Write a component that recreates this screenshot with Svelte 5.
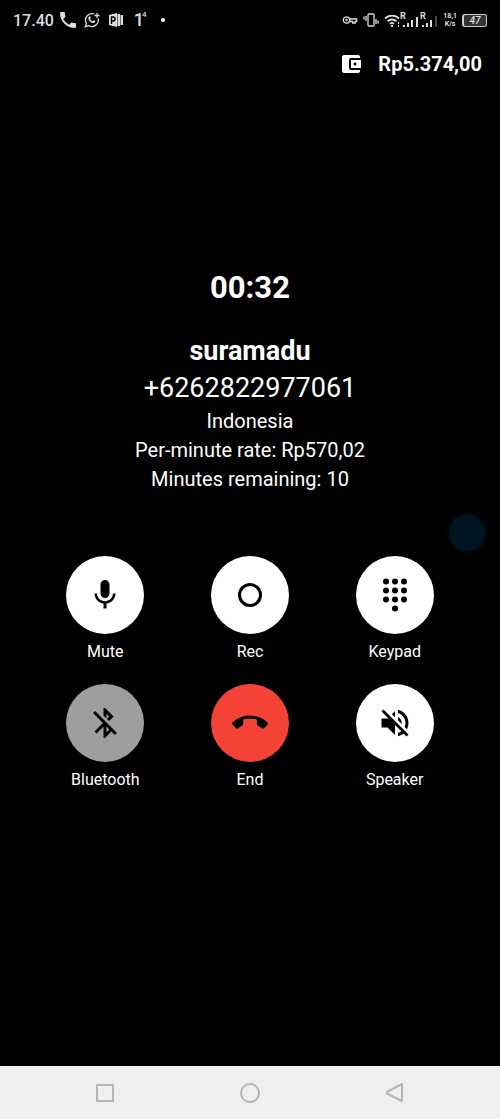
<script>
  // Call state
  const call = {
    time: '00:32',
    name: 'suramadu',
    number: '+6262822977061',
    country: 'Indonesia',
    rate: 'Rp570,02',
    remaining: 10
  };

  const balance = 'Rp5.374,00';

  const actions = [
    { id: 'mute', label: 'Mute' },
    { id: 'rec', label: 'Rec' },
    { id: 'keypad', label: 'Keypad' },
    { id: 'bluetooth', label: 'Bluetooth' },
    { id: 'end', label: 'End' },
    { id: 'speaker', label: 'Speaker' }
  ];

  // Dialpad dots, last row has only the middle one
  const dots = [
    [6, 3], [12, 3], [18, 3],
    [6, 9], [12, 9], [18, 9],
    [6, 15], [12, 15], [18, 15],
    [12, 21]
  ];
</script>

<div class="screen">
  <header class="status">
    <div class="status-left">
      <span class="clock">17.40</span>
      <svg width="16" height="16" viewBox="3 3 18 18">
        <path d="M20 15.5c-1.25 0-2.45-.2-3.57-.57a1.02 1.02 0 0 0-1.02.24l-2.2 2.2a15.07 15.07 0 0 1-6.59-6.59l2.2-2.21a.96.96 0 0 0 .25-1A11.36 11.36 0 0 1 8.5 4c0-.55-.45-1-1-1H4c-.55 0-1 .45-1 1 0 9.390 7.610 17 17 17 .55 0 1-.45 1-1v-3.500c0-.55-.45-1-1-1z" />
      </svg>
      <svg width="16" height="16" viewBox="0 0 16 16">
        <path class="line" d="M10 1.900A6.500 6.500 0 0 0 2.400 11.300L1.300 14.700l3.500-1A6.500 6.500 0 0 0 14.200 6.500" />
        <path d="M5.200 4.400c.4-.4.9-.3 1.100.1l.6 1.400-.8 1c.6 1.200 1.400 1.900 2.700 2.400l.9-1 1.600.8c.2.9-.7 2-1.800 2-2.600 0-5.300-2.900-5.200-5.100 0-.6.400-1.200.9-1.600z" />
        <path class="line" d="M13 1v5M10.500 3.500h5" />
      </svg>
      <svg width="16" height="14" viewBox="0 0 16 14">
        <path d="M1 2l8-2v14l-8-2zM9.500 1H12v12H9.500zM12.500 2H15v10h-2.500z" />
        <path class="cut" d="M3.500 11V4h1.500a1.700 1.700 0 0 1 0 4H3.500" />
      </svg>
      <span class="one">1<sup>4</sup></span>
      <span class="dot"></span>
    </div>

    <div class="status-right">
      <svg width="16" height="10" viewBox="0 0 16 10">
        <circle class="line" cx="4.500" cy="5" r="3.200" />
        <circle cx="4.500" cy="5" r="1.200" />
        <path class="line" d="M7.700 4h7v2.500h-1.500V8h-2.500V6.500h-3" />
      </svg>
      <svg width="16" height="14" viewBox="0 0 16 14">
        <rect class="line" x="5" y="1" width="6" height="12" rx="1" />
        <path class="line" d="M3 3v5M1 3.500v3M13 6v5M15 7.500v3" />
      </svg>
      <svg width="54" height="18" viewBox="0 0 54 18">
        <path class="wifi" d="M1 7.500a10 10 0 0 1 14 0M3.500 10.300a6.500 6.500 0 0 1 9 0M6 12.800a3 3 0 0 1 4 0" />
        <circle cx="8" cy="15" r="1.200" />
        <path d="M14 11h1v2h-1zM14 14h1v2h-1zM19 14h2v2h-2zM23 12h2v4h-2zM27 9h2v7h-2zM32 6h2v10h-2zM38 14h2v2h-2zM42 12h2v4h-2zM46 9h2v7h-2z" />
        <path class="faint" d="M51 5h2v11h-2z" />
        <text x="16" y="8">R</text>
        <text x="36" y="8">R</text>
      </svg>
      <span class="speed">18,1<br />K/s</span>
      <span class="battery">47</span>
    </div>
  </header>

  <div class="balance">
    <svg width="24" height="24" viewBox="0 0 24 24">
      <path d="M21 18v1c0 1.100-.9 2-2 2H5a2 2 0 0 1-2-2V5c0-1.100.89-2 2-2h14c1.100 0 2 .9 2 2v1h-9a2 2 0 0 0-2 2v8c0 1.100.89 2 2 2h9zm-9-2h10V8H12v8zm4-2.500c-.83 0-1.500-.67-1.500-1.500s.67-1.500 1.500-1.500 1.500.67 1.500 1.500-.67 1.500-1.500 1.500z" />
    </svg>
    <span>{balance}</span>
  </div>

  <main>
    <section class="info">
      <p class="time">{call.time}</p>
      <h1>{call.name}</h1>
      <p class="number">{call.number}</p>
      <p>{call.country}</p>
      <p>Per-minute rate: {call.rate}</p>
      <p>Minutes remaining: {call.remaining}</p>
    </section>

    <section class="actions">
      {#each actions as action}
        <div class="action">
          <button class={action.id} id={action.id} aria-labelledby="{action.id}-label">
            <svg width="36" height="36" viewBox="0 0 24 24">
              {#if action.id === 'mute'}
                <path d="M12 14c1.660 0 2.990-1.340 2.990-3L15 5c0-1.660-1.340-3-3-3S9 3.340 9 5v6c0 1.660 1.340 3 3 3zm5.300-3c0 3-2.540 5.100-5.300 5.100S6.700 14 6.700 11H5c0 3.410 2.720 6.230 6 6.720V21h2v-3.280c3.280-.48 6-3.300 6-6.720h-1.700z" />
              {:else if action.id === 'rec'}
                <circle class="ring" cx="12" cy="12" r="7" />
              {:else if action.id === 'keypad'}
                {#each dots as [x, y]}
                  <circle cx={x} cy={y} r="2" />
                {/each}
              {:else if action.id === 'bluetooth'}
                <path d="M13 5.830l1.880 1.880-1.600 1.600 1.410 1.410 3.020-3.020L12 2h-1v5.030l2 2v-3.200zM5.410 4L4 5.410 10.590 12 5 17.590 6.410 19 11 14.410V22h1l4.290-4.290 2.300 2.290L20 18.590 5.410 4zM13 18.170v-3.760l1.880 1.880L13 18.170z" />
              {:else if action.id === 'end'}
                <path d="M12 9c-1.600 0-3.150.25-4.600.72v3.100c0 .39-.23.74-.56.9-.98.49-1.870 1.120-2.660 1.850-.18.18-.43.28-.7.28-.28 0-.53-.11-.71-.29L.29 13.080a.96.96 0 0 1-.29-.7c0-.28.11-.53.29-.71C3.340 8.780 7.460 7 12 7s8.660 1.780 11.710 4.670c.18.18.29.43.29.71 0 .28-.11.53-.29.710l-2.480 2.480c-.18.18-.43.29-.71.29-.27 0-.52-.11-.7-.28a11.270 11.270 0 0 0-2.670-1.850.99.99 0 0 1-.56-.9v-3.100A15.100 15.100 0 0 0 12 9z" />
              {:else}
                <path d="M16.500 12c0-1.770-1.020-3.290-2.500-4.030v2.210l2.450 2.450c.03-.2.05-.41.05-.63zm2.500 0c0 .94-.2 1.820-.54 2.640l1.510 1.510A8.800 8.800 0 0 0 21 12c0-4.280-2.990-7.860-7-8.770v2.060c2.890.86 5 3.540 5 6.710zM4.270 3L3 4.270 7.730 9H3v6h4l5 5v-6.730l4.250 4.250c-.67.52-1.420.93-2.250 1.180v2.060a8.990 8.990 0 0 0 3.690-1.810L19.730 21 21 19.730l-9-9L4.270 3zM12 4L9.910 6.090 12 8.180V4z" />
              {/if}
            </svg>
          </button>
          <label id="{action.id}-label" for={action.id}>{action.label}</label>
        </div>
      {/each}
    </section>
  </main>

  <nav>
    <button aria-label="Recent apps">
      <svg width="20" height="20" viewBox="0 0 20 20"><rect x="2" y="2" width="16" height="16" /></svg>
    </button>
    <button aria-label="Home">
      <svg width="20" height="20" viewBox="0 0 20 20"><circle cx="10" cy="10" r="9" /></svg>
    </button>
    <button aria-label="Back">
      <svg width="20" height="20" viewBox="0 0 20 20"><path d="M17 1v17L2 10.500v-1.500z" /></svg>
    </button>
  </nav>

  <!-- Floating assistive dot -->
  <div class="bubble"></div>
</div>

<style>
  :global(body) {
    margin: 0;
    background: #000;
  }

  .screen {
    position: relative;
    display: flex;
    flex-direction: column;
    min-height: 100vh;
    background: #000;
    color: #fff;
    font-family: Roboto, 'Liberation Sans', sans-serif;
  }

  svg {
    display: block;
    fill: currentColor;
  }

  button {
    display: flex;
    align-items: center;
    justify-content: center;
    padding: 0;
    border: 0;
    background: none;
    color: inherit;
    cursor: pointer;
  }

  .status {
    display: flex;
    align-items: center;
    justify-content: space-between;
    height: 40px;
    padding: 0 13px;
    color: #ddd;
  }

  .status-left,
  .status-right {
    display: flex;
    align-items: center;
  }

  .status-left {
    gap: 8px;
  }

  .status-right {
    gap: 5px;
  }

  .clock {
    font-size: 16px;
    font-weight: 500;
    margin-right: -2px;
  }

  .line {
    fill: none;
    stroke: currentColor;
    stroke-width: 1.3;
  }

  .cut {
    fill: none;
    stroke: #000;
    stroke-width: 1.4;
  }

  .one {
    display: flex;
    margin-left: 2px;
    font-size: 18px;
    line-height: 20px;
    font-weight: 500;
  }

  .one sup {
    margin-left: -2px;
    font-size: 8px;
    line-height: 10px;
  }

  .dot {
    width: 4px;
    height: 4px;
    margin-left: 6px;
    border-radius: 50%;
    background: #fff;
  }

  .wifi {
    fill: none;
    stroke: currentColor;
    stroke-width: 1.8;
  }

  .faint {
    fill: #444;
  }

  text {
    font-size: 9px;
    font-weight: 700;
  }

  .speed {
    font-size: 7px;
    line-height: 8px;
    font-weight: 700;
    text-align: center;
  }

  .battery {
    box-sizing: border-box;
    width: 25px;
    height: 13px;
    border: 1px solid #ccc;
    border-left-width: 2px;
    border-radius: 3px;
    background: #333;
    font-size: 10px;
    line-height: 11px;
    font-style: italic;
    font-weight: 500;
    text-align: center;
  }

  .balance {
    display: flex;
    align-items: center;
    justify-content: flex-end;
    gap: 15px;
    height: 48px;
    padding: 0 18px;
    font-size: 20px;
    font-weight: 700;
  }

  main {
    flex: 1;
    padding: 180px 33px 0;
  }

  .info {
    text-align: center;
    font-size: 20px;
    line-height: 29px;
  }

  .info p,
  .info h1 {
    margin: 0;
  }

  .info .time {
    margin-bottom: 24px;
    font-size: 31px;
    line-height: 40px;
    font-weight: 700;
  }

  .info h1 {
    font-size: 27px;
    line-height: 38px;
    font-weight: 700;
  }

  .info .number {
    font-size: 27px;
    line-height: 37px;
  }

  .actions {
    display: grid;
    grid-template-columns: repeat(3, 1fr);
    row-gap: 22px;
    margin-top: 62px;
  }

  .action {
    display: flex;
    flex-direction: column;
    align-items: center;
    gap: 8px;
  }

  .action button {
    width: 78px;
    height: 78px;
    border-radius: 50%;
    background: #fff;
    color: #000;
  }

  .action .bluetooth {
    background: #9e9e9e;
  }

  .action .end {
    background: #f44336;
  }

  .action label {
    font-size: 16px;
    line-height: 20px;
  }

  .ring {
    fill: none;
    stroke: currentColor;
    stroke-width: 2;
  }

  nav {
    display: grid;
    grid-template-columns: repeat(3, 1fr);
    height: 53px;
    padding: 0 33px;
    background: #efefef;
    color: #b5b5b5;
  }

  nav svg {
    fill: none;
    stroke: currentColor;
    stroke-width: 2;
    stroke-linejoin: round;
  }

  .bubble {
    position: absolute;
    top: 515px;
    right: 15px;
    width: 36px;
    height: 36px;
    border-radius: 50%;
    background: #001522;
    box-shadow: 0 0 5px #001522;
  }
</style>
